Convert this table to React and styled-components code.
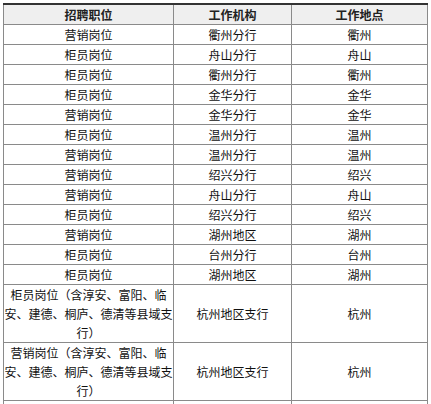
import React from 'react'
import styled, { createGlobalStyle } from 'styled-components'

const GlobalStyle = createGlobalStyle`
    html, body {
        margin: 0;
        padding: 0;
        background: #fff;
        overflow: hidden;
    }
    body {
        font-family: "Noto Sans CJK SC", "Noto Sans", sans-serif;
        font-size: 12px;
        color: #111;
    }
`

const Page = styled.div`
    padding: 3px 0 0 3px;
`

const Table = styled.table`
    border-collapse: collapse;
    table-layout: fixed;
    width: 424px;
    border-top: 2px solid #333;
    border-left: 1px solid #333;
    border-right: 1px solid #333;
`

const HeadCell = styled.th`
    height: 19px;
    padding: 0;
    background: #efefef;
    border: 1px solid #8a8a8a;
    border-top: none;
    font-weight: 700;
    text-align: center;
    line-height: 19px;
    color: #222;
`

const Cell = styled.td`
    height: ${props => (props.$tall ? '57px' : '19px')};
    padding: 0;
    border: 1px solid #8a8a8a;
    text-align: center;
    vertical-align: middle;
    line-height: 19px;
    white-space: nowrap;
`

const rows = [
    ['营销岗位', '衢州分行', '衢州'],
    ['柜员岗位', '舟山分行', '舟山'],
    ['柜员岗位', '衢州分行', '衢州'],
    ['柜员岗位', '金华分行', '金华'],
    ['营销岗位', '金华分行', '金华'],
    ['柜员岗位', '温州分行', '温州'],
    ['营销岗位', '温州分行', '温州'],
    ['营销岗位', '绍兴分行', '绍兴'],
    ['营销岗位', '舟山分行', '舟山'],
    ['柜员岗位', '绍兴分行', '绍兴'],
    ['营销岗位', '湖州地区', '湖州'],
    ['柜员岗位', '台州分行', '台州'],
    ['柜员岗位', '湖州地区', '湖州'],
]

// 县域支行岗位的说明文字按原表的断行分成三行
const countyLines = role => [
    `${role}（含淳安、富阳、临`,
    '安、建德、桐庐、德清等县域支',
    '行）',
]

const App = () => {
    return (
        <>
            <GlobalStyle />
            <Page>
                <Table>
                    <colgroup>
                        <col style={{ width: 170 }} />
                        <col style={{ width: 118 }} />
                        <col style={{ width: 136 }} />
                    </colgroup>
                    <thead>
                        <tr>
                            <HeadCell>招聘职位</HeadCell>
                            <HeadCell>工作机构</HeadCell>
                            <HeadCell>工作地点</HeadCell>
                        </tr>
                    </thead>
                    <tbody>
                        {rows.map((r, i) => (
                            <tr key={i}>
                                <Cell>{r[0]}</Cell>
                                <Cell>{r[1]}</Cell>
                                <Cell>{r[2]}</Cell>
                            </tr>
                        ))}
                        {['柜员岗位', '营销岗位'].map(role => (
                            <tr key={role}>
                                <Cell $tall>
                                    {countyLines(role).map((line, i) => (
                                        <React.Fragment key={i}>
                                            {i > 0 && <br />}
                                            {line}
                                        </React.Fragment>
                                    ))}
                                </Cell>
                                <Cell $tall>杭州地区支行</Cell>
                                <Cell $tall>杭州</Cell>
                            </tr>
                        ))}
                        <tr>
                            <Cell />
                            <Cell />
                            <Cell />
                        </tr>
                    </tbody>
                </Table>
            </Page>
        </>
    )
}

export default App
